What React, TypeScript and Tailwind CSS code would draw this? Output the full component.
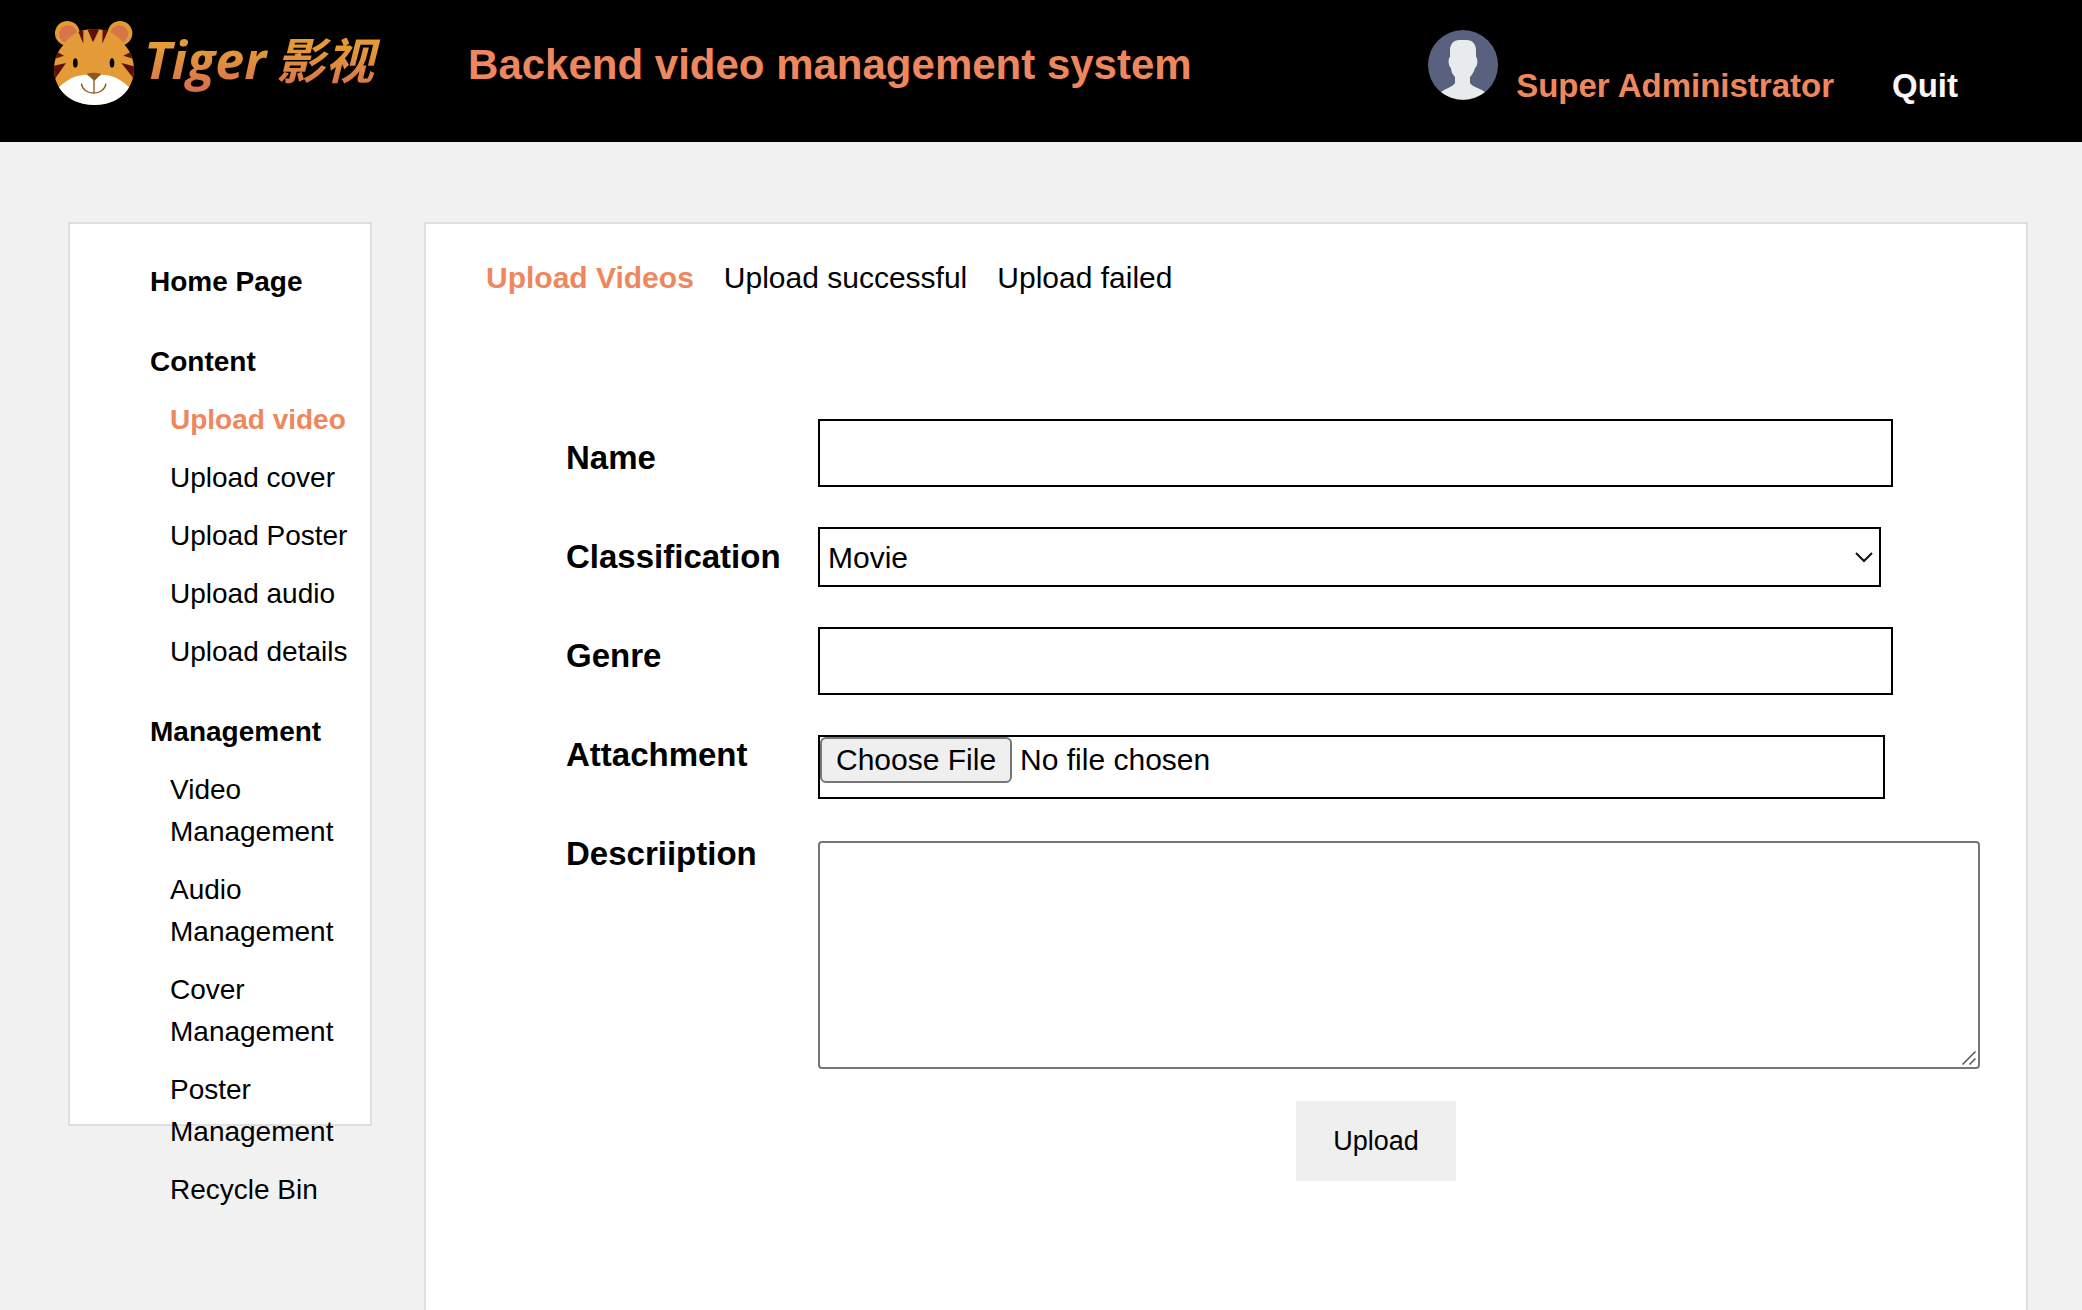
import React from "react";

type NavGroup = { title: string; items: string[] };

const groups: NavGroup[] = [
  {
    title: "Content",
    items: ["Upload video", "Upload cover", "Upload Poster", "Upload audio", "Upload details"],
  },
  {
    title: "Management",
    items: ["Video Management", "Audio Management", "Cover Management", "Poster Management", "Recycle Bin"],
  },
];

const labels = [
  { id: "name", text: "Name" },
  { id: "classification", text: "Classification" },
  { id: "genre", text: "Genre" },
  { id: "attachment", text: "Attachment" },
  { id: "description", text: "Descriiption" },
];

function TigerIcon() {
  return (
    <svg viewBox="0 0 240 252" className="h-[84px] w-20 shrink-0" aria-hidden="true">
      <defs>
        <clipPath id="tiger-head">
          <path d="M28 72 C50 38 80 24 120 24 C160 24 190 38 212 72 C228 88 240 116 240 144 C240 208 190 252 122 252 C52 252 0 208 0 144 C0 116 12 88 28 72 Z" />
        </clipPath>
      </defs>
      <circle cx="40" cy="37" r="37" fill="#e49a36" />
      <circle cx="198" cy="37" r="37" fill="#e49a36" />
      <circle cx="42" cy="39" r="27" fill="#d7754a" />
      <circle cx="196" cy="39" r="27" fill="#d7754a" />
      <g clipPath="url(#tiger-head)">
        <rect width="240" height="252" fill="#e49a36" />
        <path d="M68 20 H88 L88 68 Z" fill="#5f0f0c" />
        <path d="M98 20 H138 L117 64 Z" fill="#5f0f0c" />
        <path d="M146 20 H166 L145 68 Z" fill="#5f0f0c" />
        <path d="M0 88 L30 104 L0 114 Z" fill="#5f0f0c" />
        <path d="M240 88 L208 104 L240 114 Z" fill="#5f0f0c" />
        <path d="M0 134 L36 126 L0 178 Z" fill="#5f0f0c" />
        <path d="M240 136 L202 126 L240 174 Z" fill="#5f0f0c" />
        <path d="M0 214 C36 174 66 161 98 161 L120 174 L142 161 C172 161 204 172 240 214 V252 H0 Z" fill="#fff" />
      </g>
      <ellipse cx="64" cy="126" rx="7" ry="14" fill="#000" />
      <ellipse cx="174" cy="126" rx="7" ry="14" fill="#000" />
      <path d="M98 159 Q119 151 142 159 L121 180 Z" fill="#8a5a1c" />
      <path d="M120 174 V216 M82 188 C88 226 150 226 156 188" fill="none" stroke="#8a5a1c" strokeWidth="4" />
    </svg>
  );
}

function Avatar() {
  return (
    <svg viewBox="0 0 70 70" className="size-[70px] shrink-0" role="img" aria-label="Avatar">
      <circle cx="35" cy="35" r="35" fill="#59617f" />
      <path
        d="M22 20 C22 14 26 10 31 10 H39 C44 10 48 14 48 20 V27 C50 28 50 36 47 38 C46 42 44 45 42 47 V53 C44 57 52 58 57 62 A35 35 0 0 1 13 62 C18 58 25 57 27 53 V47 C25 45 23 42 23 38 C20 36 20 28 22 27 Z"
        fill="#e7ebeb"
      />
    </svg>
  );
}

function Header() {
  return (
    <header className="flex h-[142px] items-start bg-black pr-[124px] pl-[54px]">
      <a href="#" className="flex items-start gap-2.5 pt-[21px]" aria-label="Tiger 影视">
        <TigerIcon />
        <span className="flex items-baseline gap-2.5 bg-linear-to-b from-[#e49a36] from-35% to-[#d7704b] to-90% bg-clip-text pr-2 font-['Open_Sans','Noto_Sans_CJK_SC',sans-serif] leading-[76px] font-bold whitespace-nowrap text-transparent italic">
          <span className="text-[52px]">Tiger</span>
          <span className="text-[49px]">影视</span>
        </span>
      </a>
      <h1 className="ml-[86px] pt-10 text-[42px] leading-[50px] font-bold whitespace-nowrap text-[#ee875d]">
        Backend video management system
      </h1>
      <div className="ml-auto flex items-start pt-[30px] text-[33px] leading-10 font-bold whitespace-nowrap">
        <Avatar />
        <span className="ml-[18px] pt-9 text-[#ee875d]">Super Administrator</span>
        <button type="button" className="ml-[58px] cursor-pointer pt-9 text-[#f7f7f7]">
          Quit
        </button>
      </div>
    </header>
  );
}

function Sidebar() {
  return (
    <nav className="h-[904px] w-[304px] shrink-0 border-2 border-[#dfdfdf] bg-white pt-[37px] pl-20 text-[28px] leading-[42px]">
      <a href="#" className="block font-bold">
        Home Page
      </a>
      {groups.map((group) => (
        <section key={group.title} className="mt-[38px]">
          <h2 className="font-bold">{group.title}</h2>
          <ul className="mt-4 flex flex-col gap-4 pl-5">
            {group.items.map((item) => (
              <li key={item}>
                <a
                  href="#"
                  className={item === "Upload video" ? "block font-bold text-[#ee875d]" : "block"}
                >
                  {item}
                </a>
              </li>
            ))}
          </ul>
        </section>
      ))}
    </nav>
  );
}

function UploadForm() {
  return (
    <form className="mt-[121px] flex gap-10 pr-[46px] pl-[140px]" onSubmit={(e) => e.preventDefault()}>
      <div className="flex w-[212px] shrink-0 flex-col pt-[19px]">
        {labels.map((label) => (
          <label key={label.id} htmlFor={label.id} className="h-[99px] text-[33px] leading-10 font-bold whitespace-nowrap">
            {label.text}
          </label>
        ))}
      </div>
      <div className="flex min-w-0 flex-1 flex-col gap-10">
        <div className="pr-[87px]">
          <input id="name" type="text" className="block h-[68px] w-full border-2 border-black px-2 text-[30px]" />
        </div>
        <div className="pr-[99px]">
          <div className="relative">
            <select
              id="classification"
              className="block h-[60px] w-full appearance-none border-2 border-black bg-white px-2 text-[30px]"
            >
              <option>Movie</option>
            </select>
            <svg
              viewBox="0 0 18 12"
              className="pointer-events-none absolute top-6 right-2 h-3 w-[18px]"
              fill="none"
              stroke="#111"
              strokeWidth="2"
              aria-hidden="true"
            >
              <path d="M1 2 L9 10 L17 2" />
            </svg>
          </div>
        </div>
        <div className="pr-[87px]">
          <input id="genre" type="text" className="block h-[68px] w-full border-2 border-black px-2 text-[30px]" />
        </div>
        <div className="pr-[95px]">
          <input
            id="attachment"
            type="file"
            className="block h-16 w-full border-2 border-black text-[30px] leading-[34px] file:mr-2 file:h-[46px] file:rounded-md file:border-2 file:border-solid file:border-[#767676] file:bg-[#efefef] file:px-[14px]"
          />
        </div>
        <div className="relative mt-0.5">
          <textarea
            id="description"
            className="block h-[228px] w-full resize-none rounded-sm border-2 border-[#767676] p-2 text-[30px]"
          />
          <svg
            viewBox="0 0 14 14"
            className="pointer-events-none absolute right-1 bottom-1 size-[14px]"
            stroke="#555"
            strokeWidth="1.5"
            aria-hidden="true"
          >
            <path d="M0.5 13.5 L13.5 0.5 M7.5 13.5 L13.5 7.5" />
          </svg>
        </div>
        <div className="-mt-2 flex justify-center pr-[46px]">
          <button type="submit" className="h-20 w-40 cursor-pointer bg-[#efefef] text-[27px]">
            Upload
          </button>
        </div>
      </div>
    </form>
  );
}

export default function App() {
  return (
    <div className="flex min-h-screen flex-col bg-[#f1f1f1] font-['Liberation_Sans',Arial,sans-serif] text-black">
      <Header />
      <div className="flex flex-1 gap-[52px] pt-20 pr-[54px] pl-[68px]">
        <Sidebar />
        <main className="min-w-0 flex-1 border-2 border-b-0 border-[#dfdfdf] bg-white">
          <nav className="flex gap-[30px] pt-[34px] pl-[60px] text-[30px] leading-10">
            <a href="#" className="font-bold text-[#ee875d]">
              Upload Videos
            </a>
            <a href="#">Upload successful</a>
            <a href="#">Upload failed</a>
          </nav>
          <UploadForm />
        </main>
      </div>
    </div>
  );
}
